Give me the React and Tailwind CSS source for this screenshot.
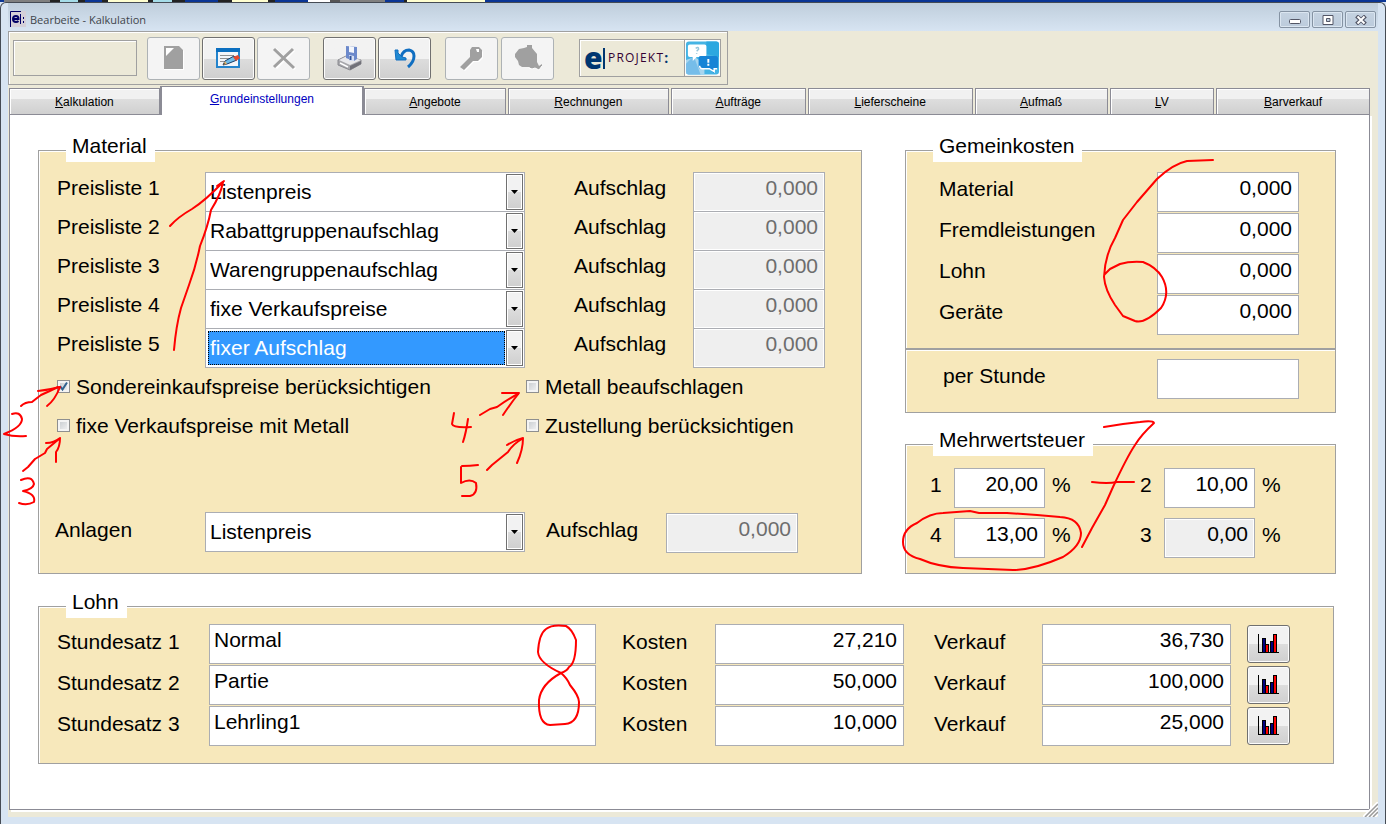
import React, { useId } from 'react';

const tabs = [
  { name: 'Kalkulation', width: 'flex-[151_1_0%]' },
  { name: 'Grundeinstellungen', width: 'flex-[203_1_0%]', active: true },
  { name: 'Angebote', width: 'flex-[142_1_0%]' },
  { name: 'Rechnungen', width: 'flex-[161_1_0%]' },
  { name: 'Aufträge', width: 'flex-[135_1_0%]' },
  { name: 'Lieferscheine', width: 'flex-[165_1_0%]' },
  { name: 'Aufmaß', width: 'flex-[133_1_0%]' },
  { name: 'LV', width: 'flex-[104_1_0%]' },
  { name: 'Barverkauf', width: 'flex-[154_1_0%]' },
];

const priceOptions = [
  'Listenpreis',
  'Rabattgruppenaufschlag',
  'Warengruppenaufschlag',
  'fixe Verkaufspreise',
  'fixer Aufschlag',
];

const overheads = ['Material', 'Fremdleistungen', 'Lohn', 'Geräte'];

const taxRates = [
  { no: '1', value: '20,00' },
  { no: '2', value: '10,00' },
  { no: '4', value: '13,00' },
  { no: '3', value: '0,00', readOnly: true },
];

const wages = [
  { label: 'Stundesatz 1', name: 'Normal', cost: '27,210', sale: '36,730' },
  { label: 'Stundesatz 2', name: 'Partie', cost: '50,000', sale: '100,000' },
  { label: 'Stundesatz 3', name: 'Lehrling1', cost: '10,000', sale: '25,000' },
];

// Hand-drawn red marks on top of the form
const inkStrokes = [
  // 1
  'M170 226 Q178 217 192 209 Q206 200 223 182 Q221 194 211 210 Q208 226 200 246 Q196 266 189 285 L181 308 Q176 326 174 350',
  'M217 186 L224 181',
  // 2
  'M21 406 Q25 402 32 402 Q37 398 41 395 Q50 391 58 387',
  'M38 391 Q48 390 60 387 Q55 400 47 406',
  'M12 414 Q20 411 22 419 Q22 427 4 434 Q14 437 26 436',
  // 3
  'M23 471 L28 467 L35 459 L45 453 L47 449 L59 439',
  'M46 443 Q54 443 60 438 Q60 447 56 452 L56 462',
  'M21 480 Q32 475 34 484 Q33 489 23 491 Q36 494 34 502 Q27 506 19 503',
  // 4
  'M480 415 L490 409 L497 407 Q508 399 518 394',
  'M502 393 L519 393 Q511 403 503 415',
  'M454 413 L452 424 Q453 428 471 427',
  'M468 419 Q466 433 463 442',
  // 5
  'M487 470 L492 465 L508 452 Q513 444 522 439',
  'M507 445 Q515 440 523 438 Q523 450 517 463',
  'M462 466 Q470 466 478 465',
  'M461 467 L461 483 Q470 478 476 483 Q478 494 470 496 L462 496',
  // 6
  'M1213 160 L1187 161 Q1173 164 1157 179 L1137 202 L1123 220 L1115 238 Q1105 255 1104 277 Q1105 290 1115 305 L1123 316 L1135 321 Q1145 324 1161 308 Q1171 293 1162 277 Q1156 267 1143 262 Q1130 261 1120 264 L1110 269 L1105 274',
  // 7
  'M1104 427 L1123 424 L1140 422 Q1153 420 1154 423 Q1141 435 1135 445 Q1127 457 1113 487 L1105 505 L1092 528 L1082 547',
  'M1092 482 Q1108 484 1117 482 L1134 482',
  // box around rate 4
  'M979 513 L970 511 L943 513 Q930 513 917 523 Q903 529 903 542 Q903 555 920 559 Q938 567 963 568 L1013 570 Q1033 570 1063 557 Q1081 546 1081 533 Q1079 518 1060 517 L1037 515 L1007 513 Z',
  // 8
  'M561 673 Q539 663 538 652 Q539 634 546 629 Q552 624 566 626 Q572 629 576 640 Q576 663 569 667 Q567 671 561 673 Q541 684 539 700 Q538 724 550 725 L565 724 Q579 723 579 702 Q579 696 570 685 Q567 678 561 673',
];

const boxClass = 'h-10 min-w-0 rounded-none border border-[#abadb3] pr-[6px] pb-2 pl-1 outline-none';

function Field({ readOnly, className, ...props }) {
  return (
    <input
      type="text"
      disabled={readOnly}
      className={`${boxClass} ${readOnly ? 'bg-[#efefef] shadow-[inset_0_0_0_1px_white]' : 'bg-white'} ${className}`}
      {...props}
    />
  );
}

function Group({ title, className, children }) {
  return (
    <fieldset className={`min-w-0 border border-[#a0a0a0] bg-[#f7e8bb] shadow-[inset_1px_1px_0_white] ${className}`}>
      <legend className="ml-[27px] h-6 bg-white pr-2 pl-[6px] leading-4">{title}</legend>
      {children}
    </fieldset>
  );
}

function PriceSelect({ id, value, focused }) {
  return (
    <div className="flex h-10 min-w-0 flex-1 border border-[#abadb3] bg-white p-px">
      <select
        id={id}
        defaultValue={value}
        className={
          focused
            ? 'm-px min-w-0 flex-1 appearance-none border border-dotted border-black bg-[#3399ff] px-px pb-[3px] text-white outline-none'
            : 'm-px min-w-0 flex-1 appearance-none border border-transparent bg-white px-px pb-[3px] outline-none'
        }
      >
        {priceOptions.map((option) => (
          <option key={option}>{option}</option>
        ))}
      </select>
      <span className="pointer-events-none flex w-[17px] items-center justify-center border border-[#707070] bg-linear-to-b from-[#f2f2f2] from-50% via-[#dddddd] via-50% to-[#cfcfcf] shadow-[inset_0_0_0_1px_white]">
        <svg width="7" height="4" viewBox="0 0 7 4"><path d="M0 0H7L3.5 4Z" /></svg>
      </span>
    </div>
  );
}

function PriceRow({ label, value, focused }) {
  const id = useId();
  return (
    <div className="-mb-px flex pr-9 pl-[18px]">
      <label htmlFor={id} className="w-[148px] leading-8">{label}</label>
      <PriceSelect id={id} value={value} focused={focused} />
      <label htmlFor={`${id}-a`} className="ml-[49px] w-[119px] leading-8">Aufschlag</label>
      <Field id={`${id}-a`} readOnly defaultValue="0,000" className="w-[132px] text-right text-[#6d6d6d]" />
    </div>
  );
}

function Check({ label, checked }) {
  return (
    <label className="flex h-[39px] items-center gap-[6px] whitespace-nowrap">
      <span className="relative flex size-[13px]">
        <input
          type="checkbox"
          defaultChecked={checked}
          className="peer size-[13px] appearance-none border border-[#8e8f8f] bg-linear-to-br from-[#c4c8cc] to-[#f6f6f6] shadow-[inset_0_0_0_2px_#f4f4f4]"
        />
        <svg className="pointer-events-none absolute inset-0 hidden peer-checked:block" width="13" height="13" viewBox="0 0 13 13" fill="none" stroke="#31628f" strokeWidth="2">
          <path d="M3 6L5.500 9.500L10 2.500" />
        </svg>
      </span>
      {label}
    </label>
  );
}

function ToolButton({ label, disabled, className = '', children }) {
  return (
    <button
      type="button"
      aria-label={label}
      disabled={disabled}
      className={`flex h-[43px] w-[53px] items-center justify-center rounded-[3px] border ${
        disabled
          ? 'border-[#adb2b5] bg-[#f4f4f4]'
          : 'border-[#707070] bg-linear-to-b from-[#f2f2f2] from-50% via-[#dddddd] via-50% to-[#cfcfcf] shadow-[inset_0_0_0_1px_#fcfcfc]'
      } ${className}`}
    >
      {children}
    </button>
  );
}

function WindowButton({ label, children }) {
  return (
    <button type="button" aria-label={label} className="flex h-[17px] w-[31px] items-center justify-center rounded-[2px] border border-[#8593a3] bg-linear-to-b from-[#c5d3e1] to-[#bccbdc] shadow-[inset_0_0_0_1px_#dbe6f1]">
      <svg width="12" height="10" viewBox="0 0 12 10">{children}</svg>
    </button>
  );
}

function TitleBar() {
  return (
    <header className="flex h-[28px] items-start bg-linear-to-b from-[#bfcedc] to-[#d7e4f2] pt-2 pr-[2px] pl-[2px]">
      <svg width="16" height="16" viewBox="0 0 16 16" className="mr-1">
        <rect width="16" height="16" fill="#d4d0d8" />
        <path d="M0.500 16V0.500H11" stroke="#000066" fill="none" />
        <path d="M3.500 8H8.500Q8.500 5 6 5Q3 5 3 8Q3 11 6 11Q7.500 11 8.500 10" stroke="#000066" strokeWidth="2" fill="none" />
        <path d="M10.500 3V13M13.500 6V8M13.500 10V12" stroke="#000066" />
      </svg>
      <h1 className="font-['Open_Sans',sans-serif] text-[11px] leading-[18px] text-[#3f454b]">Bearbeite - Kalkulation</h1>
      <div className="ml-auto flex gap-[2px]">
        <WindowButton label="Minimieren">
          <rect x="0.500" y="4.500" width="11" height="4" rx="1" fill="#fff" stroke="#535666" />
        </WindowButton>
        <WindowButton label="Maximieren">
          <path d="M1 0.500H11V9.500H1ZM4.500 3.500V6.500H8V3.500Z" fill="#fff" fillRule="evenodd" stroke="#535666" />
        </WindowButton>
        <WindowButton label="Schließen">
          <path d="M1.500 1L10.500 9M10.500 1L1.500 9" stroke="#535666" strokeWidth="4" />
          <path d="M2.500 1.500L9.500 8.500M9.500 1.500L2.500 8.500" stroke="#fff" strokeWidth="2" />
        </WindowButton>
      </div>
    </header>
  );
}

function Logo() {
  return (
    <div className="ml-[25px] flex h-[38px] w-[142px] items-center border border-[#a0a0a0] shadow-[inset_1px_1px_0_white]">
      <span className="w-[22px] pl-1 text-center font-['Open_Sans',sans-serif] text-[30px] leading-[30px] font-extrabold text-[#003670]">e</span>
      <span className="ml-px h-[21px] w-[2px] bg-[#003670]" />
      <span className="ml-[3px] font-['Open_Sans',sans-serif] text-[12px] leading-4 tracking-widest text-[#330033]">PROJEKT</span>
      <span className="font-['Open_Sans',sans-serif] text-[14px] leading-4 font-bold text-[#003670]">:</span>
      <svg width="36" height="36" viewBox="0 0 36 36" className="ml-auto shrink-0 border-l border-[#a0a0a0]">
        <rect width="36" height="36" fill="#fff" />
        <rect x="1" y="1" width="34" height="34" rx="3" fill="#45b4e4" />
        <path d="M1 20L10 17L20 24V35H4Q1 35 1 32Z" fill="#a7d5ee" />
        <path d="M1 24L9 16L16 35H4Q1 35 1 32Z" fill="#76bde9" />
        <path d="M22 1H32Q35 1 35 4V17L22 14Z" fill="#2ca8e0" />
        <path d="M5 4H20Q22 4 22 6V15Q22 17 20 17H12L8 21V17H5Q3 17 3 15V6Q3 4 5 4Z" fill="#fff" />
        <path d="M11 8Q14 6 14 9Q13 10 12 11M12 13V14" stroke="#94c5dc" strokeWidth="1.500" fill="none" />
        <path d="M16 16H32Q34 16 34 18V27Q34 29 32 29H30V34L25 29H16Q14 29 14 27V18Q14 16 16 16Z" fill="#1684d6" />
        <path d="M15 26Q15 29 18 29H25L30 32V29H33" stroke="#fff" strokeWidth="1.500" fill="none" />
        <path d="M24 19V23M24 24V26" stroke="#fff" strokeWidth="2" />
      </svg>
    </div>
  );
}

function Toolbar() {
  return (
    <div className="flex h-[54px] w-fit items-center border border-[#a0a0a0] pr-[6px] pl-1 shadow-[inset_1px_1px_0_white]">
      <input aria-label="Nummer" readOnly className="h-9 w-[124px] border border-[#a0a0a0] bg-[#ece9d8] shadow-[inset_1px_1px_0_white] outline-none" />
      <ToolButton label="Neu" disabled className="ml-[10px]">
        <svg width="22" height="26" viewBox="0 0 22 26">
          <path d="M1 2H17L21 6V25H1Z" fill="#fff" />
          <path d="M1 1H16L20 5V24H1Z" fill="#a0a0a0" />
          <path d="M3 3H11L3 11Z" fill="#fff" />
        </svg>
      </ToolButton>
      <ToolButton label="Bearbeiten" className="ml-[2px]">
        <svg width="25" height="22" viewBox="0 0 25 22">
          <rect x="1" y="2" width="22" height="18" fill="#f4f6fa" stroke="#2484cc" strokeWidth="2" />
          <path d="M0 1H24V5H0Z" fill="#0b6fc0" />
          <path d="M4 8.500H18M4 11.500H15M4 14.500H11" stroke="#929292" />
          <path d="M7 18L9 14L18 9L21 13L11 17Z" fill="#71bde8" stroke="#173c68" strokeWidth="1" />
          <path d="M17 10L22 8L24 11L20 14Z" fill="#e5492e" />
          <path d="M7 18L9 14L11 17Z" fill="#e4b26b" />
          <path d="M7 18L8 16L9 17Z" fill="#222" />
        </svg>
      </ToolButton>
      <ToolButton label="Löschen" disabled className="ml-[2px]">
        <svg width="24" height="23" viewBox="0 0 24 23" fill="none">
          <path d="M3 2L23 22M22 3L4 21" stroke="#fff" strokeWidth="3" />
          <path d="M2 2L22 21M21 2L2 20" stroke="#a0a0a0" strokeWidth="3" />
        </svg>
      </ToolButton>
      <ToolButton label="Speichern" className="ml-[13px]">
        <svg width="26" height="26" viewBox="0 0 26 26">
          <path d="M1 15L9 11L24 15V19L13 25L1 20Z" fill="#a6a6ab" stroke="#8a8a90" />
          <path d="M2 15L10 11L24 15L13 20Z" fill="#e9e9ec" />
          <path d="M13 21L24 16V19L13 25Z" fill="#717179" />
          <path d="M3 18L11 22" stroke="#fff" strokeWidth="1.500" />
          <path d="M9 1L20 2V14L17 16L9 13Z" fill="#6c89cb" />
          <path d="M12 1L17 2V8L12 7Z" fill="#f3f6fc" />
          <path d="M12 10L17 11V16H12Z" fill="#d7e0f3" />
          <path d="M13.500 11V15" stroke="#31549c" strokeWidth="2" />
        </svg>
      </ToolButton>
      <ToolButton label="Rückgängig" className="ml-[2px]">
        <svg width="24" height="24" viewBox="0 0 24 24" fill="none">
          <path d="M8 11Q10 4 16 4Q21 5 21 10Q21 16 15 21" stroke="#106ec1" strokeWidth="3" />
          <path d="M2 4L3 14H13L13 12L9 11L5 7V4Z" fill="#218ad2" stroke="#106ec1" />
        </svg>
      </ToolButton>
      <ToolButton label="Suchen" disabled className="ml-[14px]">
        <svg width="25" height="26" viewBox="0 0 25 26">
          <path d="M14 3L21 4L24 7V13L20 17H15L6 26L3 24V22L12 13V7Z" fill="#fff" />
          <path d="M13 2H20L23 5V12L19 16H14L5 25L1 22L11 12V5Z" fill="#a0a0a0" />
          <path d="M17 4H20V7H18Z" fill="#fff" />
        </svg>
      </ToolButton>
      <ToolButton label="Objekt" disabled className="ml-[3px]">
        <svg width="28" height="26" viewBox="0 0 28 26">
          <path d="M1 10V9L5 4L10 3L13 2V0H18V3L23 9V17L25 21L28 19V21L25 25L21 23L18 24L15 22H8L5 20L4 16L1 12Z" fill="#a0a0a0" />
          <path d="M15 23L18 24L21 23L25 25L28 21" stroke="#fff" fill="none" />
        </svg>
      </ToolButton>
      <Logo />
    </div>
  );
}

function TabBar() {
  return (
    <div role="tablist" className="mt-[2px] ml-px mr-2 flex h-[27px] items-end gap-[2px] text-[12px] leading-4">
      {tabs.map((tab) => (
        <button
          key={tab.name}
          type="button"
          role="tab"
          aria-selected={Boolean(tab.active)}
          className={
            tab.active
              ? `relative z-10 -mx-[2px] -mb-px h-[29px] border-x-2 border-t border-[#8b8b95] bg-white pb-1 text-[#0000c0] ${tab.width}`
              : `h-[26px] border border-b-0 border-[#8b8b95] bg-linear-to-b from-[#f1f1f1] from-40% via-[#dedede] via-40% to-[#d0d0d0] pt-px shadow-[inset_1px_1px_0_white] ${tab.width}`
          }
        >
          <span className="underline">{tab.name[0]}</span>{tab.name.slice(1)}
        </button>
      ))}
    </div>
  );
}

function MaterialGroup() {
  const id = useId();
  return (
    <Group title="Material" className="pb-5">
      <div className="pt-[10px]">
        {priceOptions.map((option, i) => (
          <PriceRow key={option} label={`Preisliste ${i + 1}`} value={option} focused={i === 4} />
        ))}
      </div>
      <div className="grid grid-cols-[469fr_335fr] pl-[18px]">
        <Check label="Sondereinkaufspreise berücksichtigen" checked />
        <Check label="Metall beaufschlagen" />
        <Check label="fixe Verkaufspreise mit Metall" />
        <Check label="Zustellung berücksichtigen" />
      </div>
      <div className="mt-[67px] flex pr-[63px] pl-4">
        <label htmlFor={id} className="w-[150px] leading-9">Anlagen</label>
        <PriceSelect id={id} value="Listenpreis" />
        <label htmlFor={`${id}-a`} className="ml-[21px] w-[120px] leading-9">Aufschlag</label>
        <Field id={`${id}-a`} readOnly defaultValue="0,000" className="mt-px w-[132px] text-right text-[#6d6d6d]" />
      </div>
    </Group>
  );
}

function OverheadGroup() {
  const id = useId();
  return (
    <Group title="Gemeinkosten" className="pb-[13px]">
      <div className="flex flex-col gap-px pt-[10px] pr-9 pl-[33px]">
        {overheads.map((name) => (
          <div key={name} className="flex justify-between">
            <label htmlFor={`${id}-${name}`} className="leading-[34px]">{name}</label>
            <Field id={`${id}-${name}`} defaultValue="0,000" className="w-[142px] text-right" />
          </div>
        ))}
      </div>
      <hr className="mt-[13px] border-t-2 border-[#a0a0a0] shadow-[0_1px_0_white]" />
      <div className="flex justify-between pt-[9px] pr-9 pl-[37px]">
        <label htmlFor={`${id}-h`} className="leading-[34px]">per Stunde</label>
        <Field id={`${id}-h`} className="w-[142px] text-right" />
      </div>
    </Group>
  );
}

function TaxGroup() {
  const id = useId();
  return (
    <Group title="Mehrwertsteuer" className="pb-[15px]">
      <div className="grid grid-cols-[210fr_195fr] gap-y-[10px] pt-3 pl-6">
        {taxRates.map((rate) => (
          <div key={rate.no} className="flex">
            <label htmlFor={`${id}-${rate.no}`} className="w-6 leading-[34px]">{rate.no}</label>
            <Field id={`${id}-${rate.no}`} readOnly={rate.readOnly} defaultValue={rate.value} className="w-[91px] text-right text-black" />
            <span className="pl-[7px] leading-[34px]">%</span>
          </div>
        ))}
      </div>
    </Group>
  );
}

function WageGroup() {
  const id = useId();
  return (
    <Group title="Lohn" className="mt-5 mr-[2px] pb-[17px]">
      <div className="flex flex-col gap-px pt-[6px] pr-[43px] pl-[18px]">
        {wages.map((wage, i) => (
          <div key={wage.label} className="flex">
            <label htmlFor={`${id}-n${i}`} className="w-[152px] leading-9">{wage.label}</label>
            <Field id={`${id}-n${i}`} defaultValue={wage.name} className="flex-1" />
            <label htmlFor={`${id}-k${i}`} className="ml-[26px] w-[93px] leading-9">Kosten</label>
            <Field id={`${id}-k${i}`} defaultValue={wage.cost} className="w-[189px] text-right" />
            <label htmlFor={`${id}-v${i}`} className="ml-[30px] w-[108px] leading-9">Verkauf</label>
            <Field id={`${id}-v${i}`} defaultValue={wage.sale} className="w-[189px] text-right" />
            <button
              type="button"
              aria-label={`Auswertung ${wage.label}`}
              className="mt-px ml-4 flex h-[38px] w-[43px] items-center justify-center rounded-[3px] border border-[#707070] bg-linear-to-b from-[#f2f2f2] from-50% via-[#dddddd] via-50% to-[#cfcfcf] pb-[2px] shadow-[inset_0_0_0_1px_#fcfcfc]"
            >
              <svg width="21" height="19" viewBox="0 0 21 19" shapeRendering="crispEdges">
                <path d="M0.500 0V18.500H21" fill="none" stroke="#000" />
                <path d="M4 4H8V18H4ZM12 7H16V18H12Z" fill="#000" />
                <path d="M5 5H7V18H5ZM13 8H15V18H13Z" fill="#000080" />
                <path d="M7 10H11V18H7ZM15 0H19V18H15Z" fill="#000" />
                <path d="M8 11H10V18H8ZM16 1H18V18H16Z" fill="#f00" />
              </svg>
            </button>
          </div>
        ))}
      </div>
    </Group>
  );
}

export default function App() {
  return (
    <div className="relative flex min-h-screen flex-col bg-[#d7e4f2] font-['Liberation_Sans',Arial,sans-serif] text-[21px] text-black">
      {/* Strip of the desktop behind the window */}
      <div className="h-[2px] bg-[linear-gradient(90deg,#0a3595_4px,#808080_4px_50px,#222_50px_60px,#a5dce8_60px_78px,#222_78px_85px,#0a3595_85px_102px,#222_102px_108px,#ffffd0_108px_148px,#222_148px_153px,#a5dce8_153px_172px,#222_172px_185px,#0a3595_185px_218px,#222_218px_232px,#ffffd0_232px_268px,#222_268px_275px,#0a3595_275px_308px,#fff_308px_330px,#555_330px_340px,#808080_340px_385px,#0a3595_385px_404px,#222_404px_407px,#ffffd0_407px_485px,#0a3595_485px)]" />

      <div className="flex flex-1 flex-col rounded-t-[6px] border border-b-0 border-[#454b54] px-[7px] pb-[7px]">
        <TitleBar />

        <main className="relative flex flex-1 flex-col bg-[#ece9d8] pb-[7px]">
          <Toolbar />
          <TabBar />
          <section className="ml-px mr-2 flex-1 border border-[#8b8b95] bg-white pt-[23px] pr-[33px] pb-11 pl-7 shadow-[2px_2px_0_white]">
            <div className="grid grid-cols-[824fr_431fr] gap-[43px]">
              <MaterialGroup />
              <div className="flex flex-col justify-between gap-4">
                <OverheadGroup />
                <TaxGroup />
              </div>
            </div>
            <WageGroup />
          </section>

          <svg className="absolute right-0 bottom-0" width="15" height="15" viewBox="0 0 15 15">
            <path d="M0 15L15 0M4 15L15 4M8 15L15 8M12 15L15 12" stroke="#fff" strokeWidth="2" />
            <path d="M2 15L15 2M6 15L15 6M10 15L15 10" stroke="#9a9a9a" strokeWidth="1.500" />
          </svg>
        </main>
      </div>

      <svg className="pointer-events-none absolute top-0 left-0 z-20" width="1386" height="824" viewBox="0 0 1386 824" fill="none" stroke="#ff0000" strokeWidth="2" strokeLinecap="round" strokeLinejoin="round" aria-hidden="true">
        {inkStrokes.map((d) => (
          <path key={d} d={d} />
        ))}
      </svg>
    </div>
  );
}
